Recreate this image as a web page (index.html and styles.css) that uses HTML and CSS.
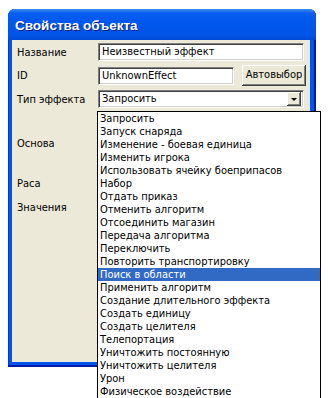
FILE: index.html
```html
<!DOCTYPE html>
<html lang="ru">
<head>
    <meta charset="UTF-8">
    <title>Свойства объекта</title>
    <link rel="stylesheet" href="styles.css">
</head>
<body>
    <div class="window">
        <div class="titlebar">Свойства объекта</div>
        <div class="client">
            <div class="row r1">
                <span class="label">Название</span>
                <div class="field wide">Неизвестный эффект</div>
            </div>
            <div class="row r2">
                <span class="label">ID</span>
                <div class="field mid">UnknownEffect</div>
                <div class="btn">Автовыбор</div>
            </div>
            <div class="row r3">
                <span class="label">Тип эффекта</span>
                <div class="field combo">
                    <span>Запросить</span>
                    <span class="drop"><span class="tri"></span></span>
                </div>
            </div>
            <div class="label solo osnova">Основа</div>
            <div class="label solo rasa">Раса</div>
            <div class="label solo znach">Значения</div>
        </div>

        <ul class="dropdown">
            <li>Запросить</li>
            <li>Запуск снаряда</li>
            <li>Изменение - боевая единица</li>
            <li>Изменить игрока</li>
            <li>Использовать ячейку боеприпасов</li>
            <li>Набор</li>
            <li>Отдать приказ</li>
            <li>Отменить алгоритм</li>
            <li>Отсоединить магазин</li>
            <li>Передача алгоритма</li>
            <li>Переключить</li>
            <li>Повторить транспортировку</li>
            <li class="sel">Поиск в области</li>
            <li>Применить алгоритм</li>
            <li>Создание длительного эффекта</li>
            <li>Создать единицу</li>
            <li>Создать целителя</li>
            <li>Телепортация</li>
            <li>Уничтожить постоянную</li>
            <li>Уничтожить целителя</li>
            <li>Урон</li>
            <li>Физическое воздействие</li>
        </ul>
    </div>
</body>
</html>
```

FILE: styles.css
```css
html, body { min-height: 398px; }
body {
    margin: 0;
    background: #fff;
    font-family: "DejaVu Sans Condensed", "DejaVu Sans", sans-serif;
    font-stretch: condensed;
    font-size: 11px;
    color: #000;
}

.window {
    position: relative;
    width: 308px;
    margin: 9px 0 0 8px;
    background: #0055ea;
    border-radius: 7px 7px 0 0;
    box-shadow: inset -2px -2px #0019a8, inset 1px 0 #0831d9;
    padding-bottom: 5px;
}
.titlebar {
    height: 31px;
    line-height: 33px;
    padding-left: 7px;
    color: #fff;
    font-family: "Liberation Sans", Arial, sans-serif;
    font-stretch: normal;
    font-weight: bold;
    font-size: 13.5px;
    border-radius: 7px 7px 0 0;
    background: linear-gradient(#3d8cf6 0, #0a5ff0 4px, #0058ee 12px, #0054e6 26px, #004ad6 31px);
    text-shadow: 1px 1px #0a1e80;
}
.client {
    margin: 0 6px 0 4px;
    height: 322px;
    background: #ece9d8;
    padding-top: 3px;
    box-sizing: border-box;
}

.row { display: flex; align-items: center; }
.r1 { height: 18px; margin-bottom: 4px; }
.r2 { height: 21px; margin-bottom: 4px; }
.r3 { height: 18px; }

.label { width: 86px; padding-left: 5px; box-sizing: border-box; flex-shrink: 0; }
.solo { line-height: 13px; }
.osnova { margin-top: 29px; }
.rasa { margin-top: 27px; }
.znach { margin-top: 11px; }

.field {
    height: 18px;
    box-sizing: border-box;
    background: #fff;
    border: 1px solid;
    border-color: #808080 #fff #fff #808080;
    box-shadow: inset 1px 1px #404040, inset -1px -1px #d4d0c8;
    padding: 0 3px;
    line-height: 16px;
    white-space: nowrap;
}
.wide { width: 206px; }
.mid { width: 136px; }
.combo { width: 206px; display: flex; justify-content: space-between; padding-right: 2px; }

.drop {
    width: 14px;
    height: 14px;
    margin-top: 1px;
    background: #ece9d8;
    box-shadow: inset -1px -1px #404040, inset 1px 1px #fff, inset -2px -2px #808080;
    display: flex;
    align-items: center;
    justify-content: center;
}
.tri {
    width: 0;
    height: 0;
    border-left: 3px solid transparent;
    border-right: 3px solid transparent;
    border-top: 3px solid #000;
    margin-left: -1px;
}

.btn {
    margin-left: 8px;
    width: 64px;
    height: 21px;
    box-sizing: border-box;
    background: #ece9d8;
    box-shadow: inset -1px -1px #404040, inset 1px 1px #fff, inset -2px -2px #808080;
    text-align: center;
    line-height: 20px;
}

.dropdown {
    position: absolute;
    left: 89px;
    top: 102px;
    width: 224px;
    margin: 0;
    padding: 0;
    list-style: none;
    background: #fff;
    border: 1px solid #000;
    box-sizing: border-box;
}
.dropdown li { display: block; height: 13px; line-height: 13px; padding-left: 2px; white-space: nowrap; overflow: hidden; }
.dropdown li.sel { background: #316ac5; color: #fff; }
```
